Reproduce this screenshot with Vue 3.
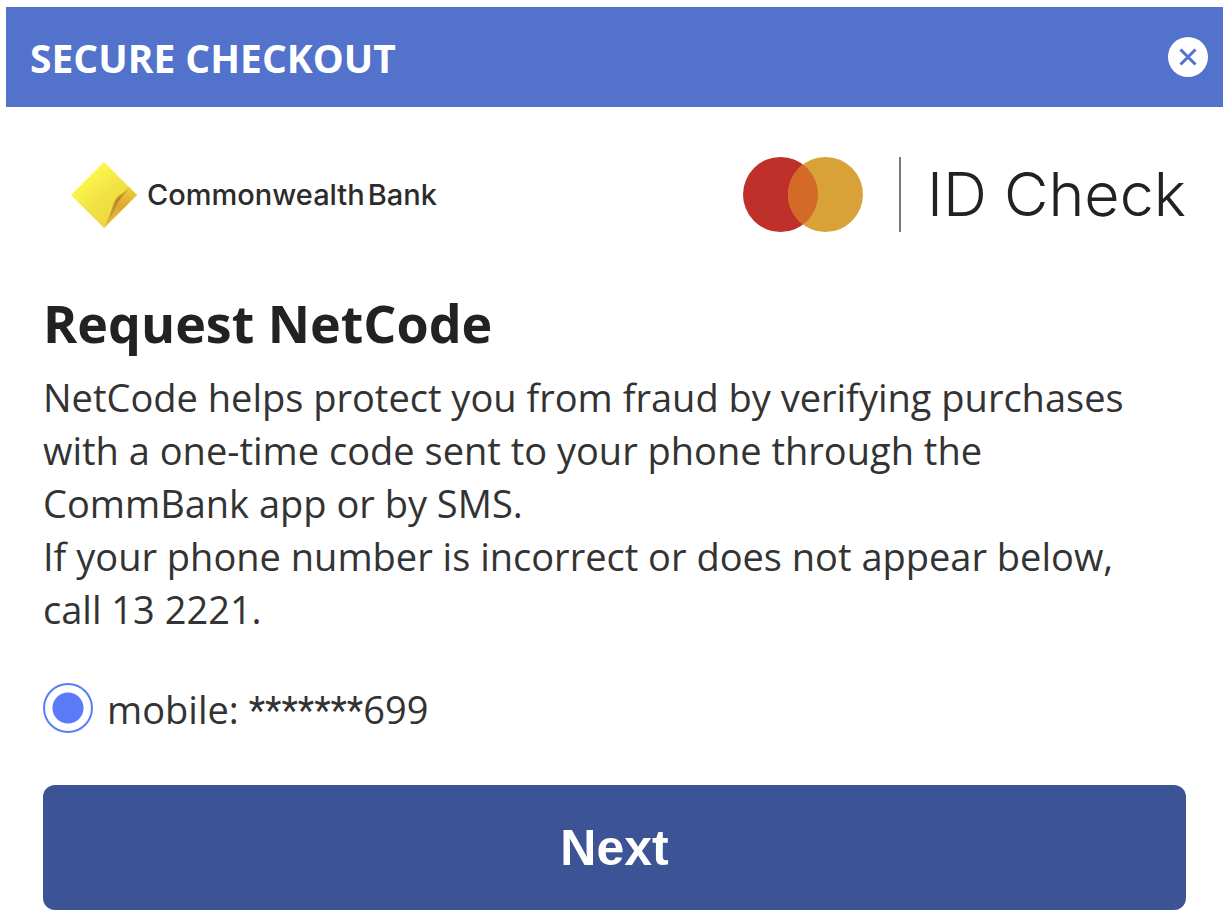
<template>
  <div class="checkout">
    <header class="top-bar">
      <h1 class="top-title">SECURE CHECKOUT</h1>
      <button class="close" type="button" aria-label="Close" @click="open = false">
        <svg viewBox="0 0 40 40" width="40" height="40" aria-hidden="true">
          <circle cx="20" cy="20" r="20" fill="#fff" />
          <path d="M12.5 12.5 27.5 27.5M27.5 12.5 12.5 27.5" stroke="#5272cb" stroke-width="3" />
        </svg>
      </button>
    </header>

    <main class="content">
      <div class="brands">
        <div class="bank">
          <svg class="bank-mark" viewBox="0 0 66 66" width="66" height="66" aria-hidden="true">
            <defs>
              <linearGradient id="face" x1="0.2" y1="0.2" x2="0.7" y2="0.8">
                <stop offset="0" stop-color="#fdfa4c" />
                <stop offset="0.5" stop-color="#f2e445" />
                <stop offset="1" stop-color="#ecd83f" />
              </linearGradient>
              <linearGradient id="fold" x1="0.7" y1="0" x2="0.5" y2="1">
                <stop offset="0" stop-color="#f0cb3c" />
                <stop offset="0.5" stop-color="#dda832" />
                <stop offset="1" stop-color="#e8c03a" />
              </linearGradient>
              <linearGradient id="crease" x1="1" y1="0" x2="0" y2="1">
                <stop offset="0" stop-color="#e3b836" />
                <stop offset="0.35" stop-color="#b98427" />
                <stop offset="1" stop-color="#dfae35" />
              </linearGradient>
            </defs>
            <path d="M33 0 66 33 33 66 0 33Z" fill="url(#face)" />
            <path d="M58 25 66 33 33 66C38 58 41 44 46 37 50 32 55 30 58 25Z" fill="url(#fold)" />
            <path d="M58 25C55 30 49 32 45 37 41 43 39 56 34 64 41 56 44 46 48 39 51 34 56 31 58 25Z" fill="url(#crease)" />
          </svg>
          <span class="bank-name">
            <span>Commonwealth</span>
            <span>Bank</span>
          </span>
        </div>
        <div class="scheme">
          <svg viewBox="0 0 120 75" width="120" height="75" aria-hidden="true">
            <circle cx="37.5" cy="37.5" r="37.5" fill="#be3029" />
            <circle cx="82.5" cy="37.5" r="37.5" fill="#d8a239" />
            <path d="M60 7.5A37.5 37.5 0 0 1 60 67.5 37.5 37.5 0 0 1 60 7.5Z" fill="#d46a28" />
          </svg>
          <span class="scheme-name">ID Check</span>
        </div>
      </div>

      <h2 class="heading">Request NetCode</h2>
      <p class="text">
        NetCode helps protect you from fraud by verifying purchases with a one-time code sent to your phone through the
        CommBank app or by SMS.
      </p>
      <p class="text">If your phone number is incorrect or does not appear below, call 13 2221.</p>

      <form @submit.prevent>
        <label v-for="phone in phones" :key="phone.id" class="option">
          <input v-model="selected" class="radio" type="radio" name="phone" :value="phone.id" />
          <span>{{ phone.id }}: <span class="mask">{{ phone.mask }}</span>{{ phone.ending }}</span>
        </label>
        <button class="next" type="submit">Next</button>
      </form>
    </main>
  </div>
</template>

<script setup>
import { ref } from 'vue'

const open = ref(true)
const phones = [{ id: 'mobile', mask: '*******', ending: '699' }]
const selected = ref('mobile')
</script>

<style>
body {
  margin: 0;
  background: #fff;
}
</style>

<style scoped>
.checkout {
  padding: 7px 2px 3px 6px;
  color: #333;
  font-family: 'Open Sans', 'Noto Sans', sans-serif;
  font-size: 38px;
  line-height: 53px;
}

.top-bar {
  display: flex;
  align-items: center;
  justify-content: space-between;
  height: 100px;
  padding: 0 15px 0 24px;
  background: #5272cb;
}

.top-title {
  margin: 0;
  color: #fff;
  font-size: 39px;
  font-weight: 700;
}

.close {
  display: flex;
  padding: 0;
  border: none;
  background: none;
  cursor: pointer;
}

.content {
  padding: 50px 37px 0;
}

.brands {
  display: flex;
  align-items: center;
  justify-content: space-between;
}

.bank {
  display: flex;
  align-items: center;
  gap: 10px;
  padding-left: 28px;
}

.bank-name {
  display: flex;
  gap: 3px;
  color: #2c2c2c;
  font-family: Inter, 'Liberation Sans', sans-serif;
  font-size: 29px;
  font-weight: 500;
}

.scheme {
  display: flex;
  align-items: center;
  gap: 36px;
}

.scheme-name {
  padding-left: 26px;
  border-left: 2px solid #777;
  color: #222;
  font-family: Inter, sans-serif;
  font-size: 61px;
  font-weight: 300;
  line-height: 75px;
}

.heading {
  margin: 56px 0 13px;
  color: #222;
  font-size: 52px;
  font-weight: 700;
  line-height: 70px;
}

.text {
  margin: 0;
  padding-right: 20px;
}

.option {
  display: flex;
  align-items: flex-start;
  gap: 14px;
  margin: 47px 0;
}

.radio {
  flex: none;
  width: 50px;
  height: 50px;
  margin: 0;
  border: 2px solid #5b7bfa;
  border-radius: 50%;
  background: radial-gradient(circle, #5b7bfa 15px, #fff 16px);
  appearance: none;
}

.radio:not(:checked) {
  background: #fff;
}

.mask {
  font-family: Roboto, sans-serif;
}

.next {
  width: 100%;
  height: 125px;
  border: none;
  border-radius: 12px;
  background: #3c5495;
  color: #fff;
  font-family: 'Liberation Sans', sans-serif;
  font-size: 50px;
  font-weight: 700;
  cursor: pointer;
}
</style>
